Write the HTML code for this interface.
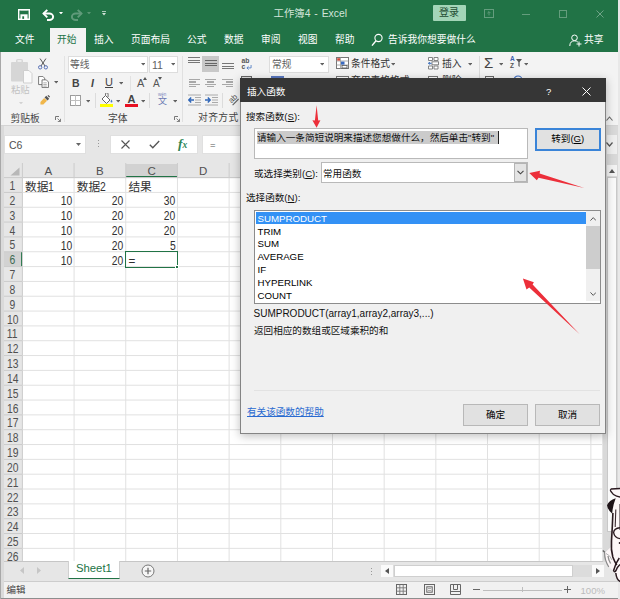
<!DOCTYPE html>
<html lang="zh-CN">
<head>
<meta charset="utf-8">
<title>Excel</title>
<style>
*{box-sizing:border-box;margin:0;padding:0}
html,body{width:620px;height:599px;overflow:hidden;background:#e8e8e8}
body{position:relative;font-family:"Liberation Sans","Noto Sans CJK SC",sans-serif;font-size:10px;color:#333;line-height:1}
.abs{position:absolute}
.t{position:absolute;white-space:nowrap}
#win{position:absolute;left:0;top:0;width:618px;height:599px;background:#f3f3f3;overflow:hidden}
#green{position:absolute;left:0;top:0;width:618px;height:52px;background:#217346}
.tab{position:absolute;top:35px;color:#fff;font-size:9.750px;letter-spacing:0}
#tab-home{position:absolute;left:50px;top:28px;width:36px;height:25px;background:#f3f3f3}
/* grid */
.colh{position:absolute;top:0;height:13px;text-align:center;font-size:11.500px;color:#444;line-height:13px}
.rowh{position:absolute;left:3px;width:19px;text-align:center;font-size:11.500px;color:#505050;line-height:13px;height:13px}
.cell{position:absolute;font-size:11.700px;color:#303030;line-height:14px;height:14px;white-space:nowrap}
.num{display:inline-block;transform:scaleX(.86);font-size:12px}
/* dialog */
#dlg{position:absolute;left:240px;top:78px;width:366px;height:355.500px;background:#f0f0f0;border:1px solid #848484;box-shadow:0 2px 9px rgba(0,0,0,.26)}
#dlg .ttl{position:absolute;left:-1px;top:-1px;right:-1px;height:24px;background:#363636}
.btn{position:absolute;height:22px;width:65px;border:1px solid #b8b8b8;background:#e1e1e1;text-align:center;font-size:9.600px;line-height:20px;color:#000}
.li{position:absolute;left:1px;height:12.600px;line-height:14.600px;font-size:9.700px;color:#000;padding-left:1.500px;overflow:visible}
</style>
</head>
<body>
<div id="win">
  <div id="green"></div>
  <div id="tab-home"></div>
  <!-- TITLE -->
  <div id="titlebar">
    <!-- save icon -->
    <svg class="abs" style="left:18px;top:9px" width="12" height="11" viewBox="0 0 12 11"><path d="M0.700 0.700h10.600v9.600h-10.600z" fill="none" stroke="#fff" stroke-width="1.400"/><rect x="2.400" y="5.300" width="7.200" height="5" fill="#fff"/><rect x="4.300" y="7.300" width="1.800" height="2.600" fill="#217346"/><rect x="2.600" y="1.200" width="6.800" height="0.800" fill="#fff" opacity=".35"/></svg>
    <!-- undo -->
    <svg class="abs" style="left:41.500px;top:8.500px" width="13" height="12" viewBox="0 0 13 12"><path d="M1.500 4.600h5.800a3.800 3.200 0 0 1 0 6.400h-2.300" fill="none" stroke="#fff" stroke-width="2"/><path d="M5.300 0.800L1.500 4.600l3.800 3.800" fill="none" stroke="#fff" stroke-width="1.900"/></svg>
    <svg class="abs" style="left:59px;top:11.500px" width="4" height="2.500" viewBox="0 0 5 3"><path d="M0 0h5L2.500 3z" fill="#fff"/></svg>
    <!-- redo dim -->
    <svg class="abs" style="left:69.500px;top:8.500px" width="13" height="12" viewBox="0 0 13 12" opacity="0.28"><path d="M11.500 4.600h-5.800a3.800 3.200 0 0 0 0 6.400h2.300" fill="none" stroke="#fff" stroke-width="2"/><path d="M7.700 0.800l3.800 3.800l-3.800 3.800" fill="none" stroke="#fff" stroke-width="1.900"/></svg>
    <svg class="abs" style="left:87px;top:11.500px" width="4" height="2.500" viewBox="0 0 5 3" opacity="0.25"><path d="M0 0h5L2.500 3z" fill="#fff"/></svg>
    <!-- customize -->
    <svg class="abs" style="left:101.500px;top:11px" width="4" height="5" viewBox="0 0 5 6" opacity=".8"><rect x="0" y="0" width="5" height="1" fill="#fff"/><path d="M0 2.500h5L2.500 5.500z" fill="#fff"/></svg>
    <div class="t" style="left:273.500px;top:8.500px;font-size:10.400px;color:#d3e5da;word-spacing:1px">工作簿4 - Excel</div>
    <div class="abs" style="left:433px;top:5px;width:33px;height:16px;background:#a3d5b8;border-radius:1px"></div>
    <div class="t" style="left:439px;top:8px;font-size:10px;color:#1e4d33">登录</div>
    <!-- window controls (dim) -->
    <svg class="abs" style="left:484px;top:9px" width="10" height="9" viewBox="0 0 10 9" opacity="0.3"><rect x="0.500" y="0.500" width="9" height="8" fill="none" stroke="#fff"/><path d="M5 2.800v3.600M3.400 4.200L5 2.600l1.600 1.600" fill="none" stroke="#fff" stroke-width=".9"/></svg>
    <div class="abs" style="left:522px;top:13.500px;width:8px;height:1px;background:#fff;opacity:.3"></div>
    <div class="abs" style="left:559px;top:9.500px;width:8px;height:8px;border:1px solid #fff;opacity:.3"></div>
    <svg class="abs" style="left:596px;top:9.500px" width="8" height="8" viewBox="0 0 8 8" opacity="0.35"><path d="M0.500 0.500l7 7M7.500 0.500l-7 7" stroke="#fff" stroke-width="1"/></svg>
  </div>
  <!-- TABS -->
  <div id="tabs">
    <div class="tab" style="left:15px">文件</div>
    <div class="tab" style="left:57px;color:#217346">开始</div>
    <div class="tab" style="left:94px">插入</div>
    <div class="tab" style="left:131px">页面布局</div>
    <div class="tab" style="left:187px">公式</div>
    <div class="tab" style="left:224px">数据</div>
    <div class="tab" style="left:261px">审阅</div>
    <div class="tab" style="left:298px">视图</div>
    <div class="tab" style="left:335px">帮助</div>
    <svg class="abs" style="left:371px;top:33px" width="13" height="14" viewBox="0 0 13 14"><circle cx="7.5" cy="5" r="3.6" fill="none" stroke="#fff" stroke-width="1.1"/><path d="M5 7.8L1 12.6" stroke="#fff" stroke-width="1.4"/></svg>
    <div class="tab" style="left:388px">告诉我你想要做什么</div>
    <svg class="abs" style="left:569px;top:34px" width="13" height="13" viewBox="0 0 13 13"><circle cx="5.5" cy="3.8" r="2.8" fill="none" stroke="#fff" stroke-width="1"/><path d="M0.8 12c0-3.6 2-5.2 4.7-5.2 1.5 0 2.7.5 3.4 1.4" fill="none" stroke="#fff" stroke-width="1"/><path d="M10 7.5v5M7.5 10h5" stroke="#fff" stroke-width="1"/></svg>
    <div class="tab" style="left:584px">共享</div>
  </div>
  <!-- RIBBON -->
  <div id="ribbon">
    <div class="abs" style="left:0;top:125px;width:618px;height:1px;background:#d4d4d4"></div>
    <div class="abs" style="left:0;top:126px;width:618px;height:473px;background:#e6e6e6"></div>
    <!-- clipboard group -->
    <svg class="abs" style="left:9.500px;top:58px" width="24" height="27" viewBox="0 0 24 27"><rect x="1" y="4" width="17" height="19.500" rx="1" fill="#d6d6d6"/><rect x="6" y="1" width="7" height="5" rx="1.5" fill="#d6d6d6"/><rect x="7.5" y="2.2" width="4" height="1.6" fill="#f3f3f3"/><path d="M13.5 12.5h5.5l3 3v9.5h-8.500z" fill="#fafafa" stroke="#cfcfcf" stroke-width="1"/></svg>
    <div class="t" style="left:11px;top:85.500px;font-size:9.300px;color:#c2c2c2">粘贴</div>
    <svg class="abs" style="left:18.500px;top:101.500px" width="4" height="2.400" viewBox="0 0 5 3"><path d="M0 0h5L2.500 3z" fill="#d2d2d2"/></svg>
    <!-- scissors -->
    <svg class="abs" style="left:38px;top:58px" width="10" height="12" viewBox="0 0 12 14"><path d="M2.500 0.500L8.500 9.500M9.500 0.500L3.500 9.500" stroke="#555" stroke-width="1.200" fill="none"/><circle cx="2.600" cy="11" r="2" fill="none" stroke="#4a66b0" stroke-width="1.100"/><circle cx="9.400" cy="11" r="2" fill="none" stroke="#4a66b0" stroke-width="1.100"/></svg>
    <!-- copy -->
    <svg class="abs" style="left:38px;top:76px" width="11.500" height="12" viewBox="0 0 13 14"><path d="M0.500 0.500h5l2 2v7.500h-7z" fill="#fff" stroke="#666" stroke-width="1"/><path d="M4.500 4.500h5l2.500 2.500v6.500h-7.500z" fill="#fff" stroke="#666" stroke-width="1"/><path d="M6 8h4M6 10h4M6 11.800h4" stroke="#888" stroke-width=".8"/></svg>
    <svg class="abs" style="left:54px;top:81px" width="4.400" height="2.600" viewBox="0 0 5 3"><path d="M0 0h5L2.500 3z" fill="#606060"/></svg>
    <!-- format painter -->
    <svg class="abs" style="left:40px;top:94.500px" width="10" height="10" viewBox="0 0 12 12"><path d="M7.500 1l3.500 3.500-2 2-3.500-3.500z" fill="#555"/><path d="M5 3.500l3.500 3.500-4.500 4.500h-3.500v-3z" fill="#f0b64a"/><path d="M9.500 0.500l2 2" stroke="#555" stroke-width="1.500"/></svg>
    <div class="t" style="left:10.500px;top:114px;font-size:9.750px;color:#444">剪贴板</div>
    <svg class="abs" style="left:55px;top:116px" width="6" height="6" viewBox="0 0 6 6"><path d="M0.500 4V0.500H4" fill="none" stroke="#777" stroke-width="1"/><path d="M2.500 2.500l3 3M5.500 2.800v2.700h-2.700" fill="none" stroke="#777" stroke-width=".9"/></svg>
    <div class="abs" style="left:64px;top:56px;width:1px;height:66px;background:#e3e3e3"></div>
    <!-- font group -->
    <div class="abs" style="left:68px;top:56px;width:80px;height:17px;background:#fff;border:1px solid #dddddd"></div>
    <div class="t" style="left:70px;top:60px;font-size:9.750px;color:#606060">等线</div>
    <svg class="abs" style="left:141px;top:63px" width="4.400" height="2.600" viewBox="0 0 5 3"><path d="M0 0h5L2.500 3z" fill="#606060"/></svg>
    <div class="abs" style="left:149px;top:56px;width:29px;height:17px;background:#fff;border:1px solid #dddddd"></div>
    <div class="t" style="left:152px;top:59.500px;font-size:10.500px;color:#606060">11</div>
    <svg class="abs" style="left:171px;top:63px" width="4.400" height="2.600" viewBox="0 0 5 3"><path d="M0 0h5L2.500 3z" fill="#606060"/></svg>
    <div class="t" style="left:72px;top:77.500px;font-size:10.500px;font-weight:bold;color:#444">B</div>
    <div class="t" style="left:91px;top:77.500px;font-size:10.500px;font-weight:bold;font-style:italic;color:#444">I</div>
    <div class="t" style="left:105px;top:77px;font-size:11px;color:#444;border-bottom:1px solid #444;padding-bottom:0px;line-height:10px">U</div>
    <svg class="abs" style="left:119px;top:82px" width="4.400" height="2.600" viewBox="0 0 5 3"><path d="M0 0h5L2.500 3z" fill="#606060"/></svg>
    <div class="t" style="left:137px;top:78px;font-size:11px;color:#555">A</div>
    <svg class="abs" style="left:143px;top:77px" width="4" height="3" viewBox="0 0 4 3"><path d="M0 3L2 0l2 3z" fill="#555"/></svg>
    <div class="t" style="left:153px;top:79px;font-size:10px;color:#555">A</div>
    <svg class="abs" style="left:158px;top:77px" width="4" height="3" viewBox="0 0 4 3"><path d="M0 0h4L2 3z" fill="#555"/></svg>
    <!-- borders -->
    <svg class="abs" style="left:70px;top:95px" width="11" height="11" viewBox="0 0 11 11"><rect x="0.500" y="0.500" width="10" height="10" fill="#fff" stroke="#9c9c9c"/><path d="M5.500 0.500v10M0.500 5.500h10" stroke="#c0c0c0" stroke-width="1"/></svg>
    <svg class="abs" style="left:86px;top:100px" width="4.400" height="2.600" viewBox="0 0 5 3"><path d="M0 0h5L2.500 3z" fill="#606060"/></svg>
    <div class="abs" style="left:95px;top:93px;width:1px;height:15px;background:#dcdcdc"></div>
    <!-- fill color -->
    <svg class="abs" style="left:100px;top:93px" width="14" height="11" viewBox="0 0 14 11"><path d="M5.500 2.500l4.500 4.500-3.500 3.500-4.500-4.500z" fill="#fff" stroke="#666" stroke-width="1"/><path d="M5.500 2.500V1a1.300 1.300 0 0 1 2.600 0v3" fill="none" stroke="#666" stroke-width=".9"/><path d="M11.500 6.500c1.200 1.800 1.200 3 0 3s-1.200-1.200 0-3z" fill="#4a7ac0"/></svg>
    <div class="abs" style="left:100px;top:104px;width:13px;height:3px;background:#ffff00"></div>
    <svg class="abs" style="left:116px;top:100px" width="4.400" height="2.600" viewBox="0 0 5 3"><path d="M0 0h5L2.500 3z" fill="#606060"/></svg>
    <!-- font color -->
    <div class="t" style="left:127.500px;top:93.500px;font-size:11px;font-weight:bold;color:#444">A</div>
    <div class="abs" style="left:125px;top:104px;width:13px;height:3px;background:#e81123"></div>
    <svg class="abs" style="left:141px;top:100px" width="4.400" height="2.600" viewBox="0 0 5 3"><path d="M0 0h5L2.500 3z" fill="#606060"/></svg>
    <div class="abs" style="left:149px;top:93px;width:1px;height:15px;background:#dcdcdc"></div><div class="abs" style="left:130px;top:76px;width:1px;height:15px;background:#e2e2e2"></div>
    <div class="t" style="left:158px;top:96.500px;font-size:9px;color:#6b78b2">文</div>
    <div class="t" style="left:158px;top:92.500px;font-size:4.500px;color:#7d89be;letter-spacing:0">wén</div>
    <svg class="abs" style="left:173px;top:100px" width="4.400" height="2.600" viewBox="0 0 5 3"><path d="M0 0h5L2.500 3z" fill="#606060"/></svg>
    <div class="t" style="left:108px;top:114px;font-size:9.750px;color:#444">字体</div>
    <svg class="abs" style="left:174px;top:116px" width="6" height="6" viewBox="0 0 6 6"><path d="M0.500 4V0.500H4" fill="none" stroke="#777" stroke-width="1"/><path d="M2.500 2.500l3 3M5.500 2.800v2.700h-2.700" fill="none" stroke="#777" stroke-width=".9"/></svg>
    <div class="abs" style="left:182px;top:56px;width:1px;height:66px;background:#e0e0e0"></div>
    <!-- align group -->
    <div class="abs" style="left:202px;top:56px;width:17px;height:16px;background:#c8c8c8"></div>
<div class="abs" style="left:188px;top:57.0px;width:12px;height:1px;background:#777"></div><div class="abs" style="left:188px;top:59.5px;width:12px;height:1px;background:#777"></div><div class="abs" style="left:188px;top:62.0px;width:12px;height:1px;background:#777"></div><div class="abs" style="left:205px;top:60.0px;width:12px;height:1px;background:#666"></div><div class="abs" style="left:205px;top:62.5px;width:12px;height:1px;background:#666"></div><div class="abs" style="left:205px;top:65.0px;width:12px;height:1px;background:#666"></div><div class="abs" style="left:222px;top:63.0px;width:12px;height:1px;background:#777"></div><div class="abs" style="left:222px;top:65.5px;width:12px;height:1px;background:#777"></div><div class="abs" style="left:222px;top:68.0px;width:12px;height:1px;background:#777"></div><div class="abs" style="left:189px;top:79.0px;width:11px;height:1.3px;background:#a8a8a8"></div><div class="abs" style="left:189px;top:81.3px;width:7px;height:1.3px;background:#a8a8a8"></div><div class="abs" style="left:189px;top:83.6px;width:11px;height:1.3px;background:#a8a8a8"></div><div class="abs" style="left:189px;top:85.9px;width:7px;height:1.3px;background:#a8a8a8"></div><div class="abs" style="left:205px;top:79.0px;width:11px;height:1.3px;background:#a8a8a8"></div><div class="abs" style="left:207px;top:81.3px;width:7px;height:1.3px;background:#a8a8a8"></div><div class="abs" style="left:205px;top:83.6px;width:11px;height:1.3px;background:#a8a8a8"></div><div class="abs" style="left:207px;top:85.9px;width:7px;height:1.3px;background:#a8a8a8"></div><div class="abs" style="left:222px;top:79.0px;width:11px;height:1.3px;background:#a8a8a8"></div><div class="abs" style="left:226px;top:81.3px;width:7px;height:1.3px;background:#a8a8a8"></div><div class="abs" style="left:222px;top:83.6px;width:11px;height:1.3px;background:#a8a8a8"></div><div class="abs" style="left:226px;top:85.9px;width:7px;height:1.3px;background:#a8a8a8"></div>
    <!-- wrap text -->
    <div class="t" style="left:241.500px;top:57.500px;font-size:6.800px;font-weight:bold;color:#555;line-height:6px">ab<br>c</div>
    <svg class="abs" style="left:246px;top:64.500px" width="6" height="5" viewBox="0 0 7 6"><path d="M6 0v3.500H1M3 1.500L1 3.500l2 2" fill="none" stroke="#4a7ac0" stroke-width="1"/></svg>
    <!-- indent icons -->
    <svg class="abs" style="left:188px;top:94px" width="13" height="12" viewBox="0 0 13 12"><path d="M0 1h13M7 3.500h6M7 6h6M7 8.500h6M0 11h13" stroke="#aaa" stroke-width="1"/><path d="M6 6H1M3.200 3.500L0.800 6l2.400 2.500" fill="none" stroke="#2f66b8" stroke-width="1.400"/></svg>
    <svg class="abs" style="left:205px;top:94px" width="13" height="12" viewBox="0 0 13 12"><path d="M0 1h13M7 3.500h6M7 6h6M7 8.500h6M0 11h13" stroke="#aaa" stroke-width="1"/><path d="M0 6h5M2.800 3.500L5.200 6 2.800 8.500" fill="none" stroke="#2f66b8" stroke-width="1.400"/></svg>
    <div class="abs" style="left:222px;top:93px;width:1px;height:15px;background:#dcdcdc"></div>
    <div class="t" style="left:232.500px;top:96.500px;font-size:8px;color:#555;transform:rotate(-45deg);transform-origin:left bottom">ab</div>
    <svg class="abs" style="left:229px;top:96px" width="13" height="12" viewBox="0 0 13 12"><path d="M3.600 9.200L9.600 3" stroke="#666" stroke-width="1.100"/></svg>
    <div class="t" style="left:198px;top:113px;font-size:9.750px;color:#444;letter-spacing:.4px">对齐方式</div>
    <div class="abs" style="left:241px;top:75.500px;width:11px;height:5px;border:1px solid #666;border-bottom:0;background:#ddd"></div>
    <!-- number group -->
    <div class="abs" style="left:269px;top:56px;width:60px;height:17px;background:#fff;border:1px solid #dddddd"></div>
    <div class="t" style="left:272px;top:60px;font-size:9.750px;color:#606060">常规</div>
    <svg class="abs" style="left:320px;top:63px" width="4.400" height="2.600" viewBox="0 0 5 3"><path d="M0 0h5L2.500 3z" fill="#606060"/></svg>
    <div class="abs" style="left:271px;top:76px;width:13px;height:3px;background:#5a78c0"></div>
    <!-- styles group -->
    <svg class="abs" style="left:336px;top:57px" width="13" height="12" viewBox="0 0 13 12"><rect x="0.500" y="0.500" width="12" height="11" fill="#fff" stroke="#777"/><path d="M0.500 4h12M0.500 8h12M4.500 0.500v11" stroke="#999" stroke-width=".8"/><rect x="1.200" y="1.200" width="2.800" height="2.400" fill="#d04a3a"/><rect x="5" y="4.600" width="3.500" height="3" fill="#3a6ac0"/><rect x="6" y="8.400" width="5" height="2.600" fill="#fff" stroke="#555" stroke-width=".8"/></svg>
    <div class="t" style="left:351px;top:59px;font-size:9.750px;color:#333">条件格式</div>
    <svg class="abs" style="left:391px;top:63px" width="4.400" height="2.600" viewBox="0 0 5 3"><path d="M0 0h5L2.500 3z" fill="#606060"/></svg>
    <div class="abs" style="left:336px;top:76px;width:13px;height:4px;border:1px solid #777;border-bottom:0;background:#fff"></div>
    <div class="t" style="left:351px;top:75.500px;font-size:9.750px;color:#333">套用表格格式</div>
    <!-- cells group -->
    <svg class="abs" style="left:428px;top:57px" width="11" height="13" viewBox="0 0 11 13"><path d="M0.500 0.500h4v3h-4zM6 0.500h4v3h-4zM0.500 9h4v3h-4zM6 9h4v3h-4z" fill="#fff" stroke="#777" stroke-width=".9"/><rect x="4" y="4.800" width="6.500" height="3" fill="#fff" stroke="#777" stroke-width=".9"/><path d="M3.500 6.300H0.500M1.800 5L0.500 6.300l1.300 1.300" fill="none" stroke="#2f66b8" stroke-width="1"/></svg>
    <div class="t" style="left:442px;top:59px;font-size:9.750px;color:#333">插入</div>
    <svg class="abs" style="left:468px;top:63px" width="4.400" height="2.600" viewBox="0 0 5 3"><path d="M0 0h5L2.500 3z" fill="#606060"/></svg>
    <div class="abs" style="left:428px;top:76px;width:10px;height:4px;border:1px solid #777;border-bottom:0;background:#fff"></div>
    <div class="t" style="left:442px;top:75.500px;font-size:9.750px;color:#333">删除</div>
    <div class="abs" style="left:479px;top:56px;width:1px;height:24px;background:#dadada"></div>
    <!-- editing group -->
    <div class="t" style="left:484px;top:55px;font-size:15px;color:#444;transform-origin:left">&#931;</div>
    <svg class="abs" style="left:499px;top:63px" width="4.400" height="2.600" viewBox="0 0 5 3"><path d="M0 0h5L2.500 3z" fill="#606060"/></svg>
    <div class="t" style="left:510px;top:56px;font-size:6.500px;color:#3a5fae;line-height:6.500px;font-weight:bold">A<br><span style="color:#555">Z</span></div>
    <svg class="abs" style="left:516px;top:59px" width="6" height="8" viewBox="0 0 6 8"><path d="M0 0h6L3.600 3v5L2.400 7V3z" fill="#555"/></svg>
    <svg class="abs" style="left:524px;top:63px" width="4.400" height="2.600" viewBox="0 0 5 3"><path d="M0 0h5L2.500 3z" fill="#606060"/></svg>
    <div class="abs" style="left:485px;top:76px;width:9px;height:4px;border:1px solid #666;border-bottom:0"></div>
    <svg class="abs" style="left:513px;top:75px" width="10" height="6" viewBox="0 0 10 6"><circle cx="5" cy="5" r="4" fill="none" stroke="#3a6ac0" stroke-width="1.200"/></svg>
    <!-- collapse chevron + formula expand + scroll -->
    <svg class="abs" style="left:606px;top:116px" width="7" height="5" viewBox="0 0 7 5"><path d="M0.500 4.500l3-3.500 3 3.500" fill="none" stroke="#666" stroke-width="1.100"/></svg>
  </div>
  <!-- FORMULA -->
  <div id="fbar">
    <div class="abs" style="left:4px;top:135px;width:82px;height:19px;background:#fff;border:1px solid #e0e0e0"></div>
    <div class="t" style="left:9px;top:139.500px;font-size:10.500px;color:#505050">C6</div>
    <svg class="abs" style="left:76px;top:143px" width="5" height="3" viewBox="0 0 5 3"><path d="M0 0h5L2.500 3z" fill="#666"/></svg>
    <div class="abs" style="left:98px;top:140px;width:1px;height:1px;background:#999;box-shadow:0 3px 0 #999,0 6px 0 #999"></div>
    <div class="abs" style="left:110px;top:135px;width:88px;height:19px;background:#fff;border:1px solid #e0e0e0"></div>
    <svg class="abs" style="left:121px;top:140px" width="9" height="9" viewBox="0 0 9 9"><path d="M0.500 0.500l8 8M8.500 0.500l-8 8" stroke="#555" stroke-width="1.100"/></svg>
    <svg class="abs" style="left:149px;top:140px" width="11" height="9" viewBox="0 0 11 9"><path d="M0.800 4.800l3 3L10.200 1" fill="none" stroke="#555" stroke-width="1.300"/></svg>
    <div class="t" style="left:178px;top:136.500px;font-size:13.500px;font-style:italic;font-weight:bold;color:#2e8556;font-family:'Liberation Serif',serif">f<span style="font-size:9.500px">x</span></div>
    <div class="abs" style="left:202px;top:135px;width:400px;height:19px;background:#fff;border:1px solid #e0e0e0"></div>
    <div class="t" style="left:210px;top:140px;font-size:9.500px;color:#555">=</div>
  </div>
  <!-- GRID -->
  <div id="grid" style="position:absolute;left:0;top:163px;width:602px;height:398.5px;background:#fff;overflow:hidden"><div class="abs" style="left:0;top:0;width:602px;height:14.6px;background:#e6e6e6"></div><div class="abs" style="left:0;top:0;width:22.4px;height:398.5px;background:#e6e6e6"></div><div class="abs" style="left:125.8px;top:0.5px;width:51.7px;height:13.1px;background:#d2d2d2"></div><div class="abs" style="left:125.8px;top:13.3px;width:51.7px;height:1.3px;background:#217346"></div><div class="abs" style="left:1px;top:88.8px;width:21.4px;height:14.8px;background:#d2d2d2"></div><div class="abs" style="left:21.1px;top:88.8px;width:1.3px;height:14.8px;background:#217346"></div><svg class="abs" style="left:0;top:0" width="602" height="398.5" viewBox="0 163 602 398.5"><path d="M22.40 163V177.60" stroke="#cbcbcb" stroke-width="1"/><path d="M22.40 177.60V561.5" stroke="#cbcbcb" stroke-width="1"/><path d="M74.08 163V177.60" stroke="#cbcbcb" stroke-width="1"/><path d="M74.08 177.60V561.5" stroke="#e1e1e1" stroke-width="1"/><path d="M125.76 163V177.60" stroke="#cbcbcb" stroke-width="1"/><path d="M125.76 177.60V561.5" stroke="#e1e1e1" stroke-width="1"/><path d="M177.44 163V177.60" stroke="#cbcbcb" stroke-width="1"/><path d="M177.44 177.60V561.5" stroke="#e1e1e1" stroke-width="1"/><path d="M229.12 163V177.60" stroke="#cbcbcb" stroke-width="1"/><path d="M229.12 177.60V561.5" stroke="#e1e1e1" stroke-width="1"/><path d="M280.80 163V177.60" stroke="#cbcbcb" stroke-width="1"/><path d="M280.80 177.60V561.5" stroke="#e1e1e1" stroke-width="1"/><path d="M332.48 163V177.60" stroke="#cbcbcb" stroke-width="1"/><path d="M332.48 177.60V561.5" stroke="#e1e1e1" stroke-width="1"/><path d="M384.16 163V177.60" stroke="#cbcbcb" stroke-width="1"/><path d="M384.16 177.60V561.5" stroke="#e1e1e1" stroke-width="1"/><path d="M435.84 163V177.60" stroke="#cbcbcb" stroke-width="1"/><path d="M435.84 177.60V561.5" stroke="#e1e1e1" stroke-width="1"/><path d="M487.52 163V177.60" stroke="#cbcbcb" stroke-width="1"/><path d="M487.52 177.60V561.5" stroke="#e1e1e1" stroke-width="1"/><path d="M539.20 163V177.60" stroke="#cbcbcb" stroke-width="1"/><path d="M539.20 177.60V561.5" stroke="#e1e1e1" stroke-width="1"/><path d="M590.88 163V177.60" stroke="#cbcbcb" stroke-width="1"/><path d="M590.88 177.60V561.5" stroke="#e1e1e1" stroke-width="1"/><path d="M22.40 177.60H602" stroke="#e1e1e1" stroke-width="1"/><path d="M3 177.60H22.40" stroke="#cbcbcb" stroke-width="1"/><path d="M22.40 192.43H602" stroke="#e1e1e1" stroke-width="1"/><path d="M3 192.43H22.40" stroke="#cbcbcb" stroke-width="1"/><path d="M22.40 207.26H602" stroke="#e1e1e1" stroke-width="1"/><path d="M3 207.26H22.40" stroke="#cbcbcb" stroke-width="1"/><path d="M22.40 222.09H602" stroke="#e1e1e1" stroke-width="1"/><path d="M3 222.09H22.40" stroke="#cbcbcb" stroke-width="1"/><path d="M22.40 236.92H602" stroke="#e1e1e1" stroke-width="1"/><path d="M3 236.92H22.40" stroke="#cbcbcb" stroke-width="1"/><path d="M22.40 251.75H602" stroke="#e1e1e1" stroke-width="1"/><path d="M3 251.75H22.40" stroke="#cbcbcb" stroke-width="1"/><path d="M22.40 266.58H602" stroke="#e1e1e1" stroke-width="1"/><path d="M3 266.58H22.40" stroke="#cbcbcb" stroke-width="1"/><path d="M22.40 281.41H602" stroke="#e1e1e1" stroke-width="1"/><path d="M3 281.41H22.40" stroke="#cbcbcb" stroke-width="1"/><path d="M22.40 296.24H602" stroke="#e1e1e1" stroke-width="1"/><path d="M3 296.24H22.40" stroke="#cbcbcb" stroke-width="1"/><path d="M22.40 311.07H602" stroke="#e1e1e1" stroke-width="1"/><path d="M3 311.07H22.40" stroke="#cbcbcb" stroke-width="1"/><path d="M22.40 325.90H602" stroke="#e1e1e1" stroke-width="1"/><path d="M3 325.90H22.40" stroke="#cbcbcb" stroke-width="1"/><path d="M22.40 340.73H602" stroke="#e1e1e1" stroke-width="1"/><path d="M3 340.73H22.40" stroke="#cbcbcb" stroke-width="1"/><path d="M22.40 355.56H602" stroke="#e1e1e1" stroke-width="1"/><path d="M3 355.56H22.40" stroke="#cbcbcb" stroke-width="1"/><path d="M22.40 370.39H602" stroke="#e1e1e1" stroke-width="1"/><path d="M3 370.39H22.40" stroke="#cbcbcb" stroke-width="1"/><path d="M22.40 385.22H602" stroke="#e1e1e1" stroke-width="1"/><path d="M3 385.22H22.40" stroke="#cbcbcb" stroke-width="1"/><path d="M22.40 400.05H602" stroke="#e1e1e1" stroke-width="1"/><path d="M3 400.05H22.40" stroke="#cbcbcb" stroke-width="1"/><path d="M22.40 414.88H602" stroke="#e1e1e1" stroke-width="1"/><path d="M3 414.88H22.40" stroke="#cbcbcb" stroke-width="1"/><path d="M22.40 429.71H602" stroke="#e1e1e1" stroke-width="1"/><path d="M3 429.71H22.40" stroke="#cbcbcb" stroke-width="1"/><path d="M22.40 444.54H602" stroke="#e1e1e1" stroke-width="1"/><path d="M3 444.54H22.40" stroke="#cbcbcb" stroke-width="1"/><path d="M22.40 459.37H602" stroke="#e1e1e1" stroke-width="1"/><path d="M3 459.37H22.40" stroke="#cbcbcb" stroke-width="1"/><path d="M22.40 474.20H602" stroke="#e1e1e1" stroke-width="1"/><path d="M3 474.20H22.40" stroke="#cbcbcb" stroke-width="1"/><path d="M22.40 489.03H602" stroke="#e1e1e1" stroke-width="1"/><path d="M3 489.03H22.40" stroke="#cbcbcb" stroke-width="1"/><path d="M22.40 503.86H602" stroke="#e1e1e1" stroke-width="1"/><path d="M3 503.86H22.40" stroke="#cbcbcb" stroke-width="1"/><path d="M22.40 518.69H602" stroke="#e1e1e1" stroke-width="1"/><path d="M3 518.69H22.40" stroke="#cbcbcb" stroke-width="1"/><path d="M22.40 533.52H602" stroke="#e1e1e1" stroke-width="1"/><path d="M3 533.52H22.40" stroke="#cbcbcb" stroke-width="1"/><path d="M22.40 548.35H602" stroke="#e1e1e1" stroke-width="1"/><path d="M3 548.35H22.40" stroke="#cbcbcb" stroke-width="1"/><path d="M22.40 563.18H602" stroke="#e1e1e1" stroke-width="1"/><path d="M3 563.18H22.40" stroke="#cbcbcb" stroke-width="1"/><path d="M22.40 177.60H602" stroke="#cbcbcb" stroke-width="1"/><path d="M19.500 167.500V175.500H10.500z" fill="#b8b8b8"/></svg><div class="colh" style="left:22.4px;width:51.7px;top:1.5px;color:#505050">A</div><div class="colh" style="left:74.1px;width:51.7px;top:1.5px;color:#505050">B</div><div class="colh" style="left:125.8px;width:51.7px;top:1.5px;color:#505050">C</div><div class="colh" style="left:177.4px;width:51.7px;top:1.5px;color:#505050">D</div><div class="colh" style="left:229.1px;width:51.7px;top:1.5px;color:#505050">E</div><div class="colh" style="left:280.8px;width:51.7px;top:1.5px;color:#505050">F</div><div class="colh" style="left:332.5px;width:51.7px;top:1.5px;color:#505050">G</div><div class="colh" style="left:384.2px;width:51.7px;top:1.5px;color:#505050">H</div><div class="colh" style="left:435.8px;width:51.7px;top:1.5px;color:#505050">I</div><div class="colh" style="left:487.5px;width:51.7px;top:1.5px;color:#505050">J</div><div class="colh" style="left:539.2px;width:51.7px;top:1.5px;color:#505050">K</div><div class="rowh" style="top:17.1px"><span class="num" style="transform-origin:center">1</span></div><div class="rowh" style="top:31.9px"><span class="num" style="transform-origin:center">2</span></div><div class="rowh" style="top:46.8px"><span class="num" style="transform-origin:center">3</span></div><div class="rowh" style="top:61.6px"><span class="num" style="transform-origin:center">4</span></div><div class="rowh" style="top:76.4px"><span class="num" style="transform-origin:center">5</span></div><div class="rowh" style="top:91.2px"><span class="num" style="transform-origin:center;color:#3d6b52">6</span></div><div class="rowh" style="top:106.1px"><span class="num" style="transform-origin:center">7</span></div><div class="rowh" style="top:120.9px"><span class="num" style="transform-origin:center">8</span></div><div class="rowh" style="top:135.7px"><span class="num" style="transform-origin:center">9</span></div><div class="rowh" style="top:150.6px"><span class="num" style="transform-origin:center">10</span></div><div class="rowh" style="top:165.4px"><span class="num" style="transform-origin:center">11</span></div><div class="rowh" style="top:180.2px"><span class="num" style="transform-origin:center">12</span></div><div class="rowh" style="top:195.1px"><span class="num" style="transform-origin:center">13</span></div><div class="rowh" style="top:209.9px"><span class="num" style="transform-origin:center">14</span></div><div class="rowh" style="top:224.7px"><span class="num" style="transform-origin:center">15</span></div><div class="rowh" style="top:239.5px"><span class="num" style="transform-origin:center">16</span></div><div class="rowh" style="top:254.4px"><span class="num" style="transform-origin:center">17</span></div><div class="rowh" style="top:269.2px"><span class="num" style="transform-origin:center">18</span></div><div class="rowh" style="top:284.0px"><span class="num" style="transform-origin:center">19</span></div><div class="rowh" style="top:298.9px"><span class="num" style="transform-origin:center">20</span></div><div class="rowh" style="top:313.7px"><span class="num" style="transform-origin:center">21</span></div><div class="rowh" style="top:328.5px"><span class="num" style="transform-origin:center">22</span></div><div class="rowh" style="top:343.4px"><span class="num" style="transform-origin:center">23</span></div><div class="rowh" style="top:358.2px"><span class="num" style="transform-origin:center">24</span></div><div class="rowh" style="top:373.0px"><span class="num" style="transform-origin:center">25</span></div><div class="rowh" style="top:387.9px"><span class="num" style="transform-origin:center">26</span></div><div class="cell" style="left:25.0px;top:16.5px">数据<span class="num" style="transform-origin:left center">1</span></div><div class="cell" style="left:76.7px;top:16.5px">数据<span class="num" style="transform-origin:left center">2</span></div><div class="cell" style="left:128.4px;top:16.5px">结果</div><div class="cell" style="left:22.4px;top:31.3px;width:49.5px;text-align:right"><span class="num" style="transform-origin:right center">10</span></div><div class="cell" style="left:74.1px;top:31.3px;width:49.5px;text-align:right"><span class="num" style="transform-origin:right center">20</span></div><div class="cell" style="left:125.8px;top:31.3px;width:49.5px;text-align:right"><span class="num" style="transform-origin:right center">30</span></div><div class="cell" style="left:22.4px;top:46.2px;width:49.5px;text-align:right"><span class="num" style="transform-origin:right center">10</span></div><div class="cell" style="left:74.1px;top:46.2px;width:49.5px;text-align:right"><span class="num" style="transform-origin:right center">20</span></div><div class="cell" style="left:125.8px;top:46.2px;width:49.5px;text-align:right"><span class="num" style="transform-origin:right center">20</span></div><div class="cell" style="left:22.4px;top:61.0px;width:49.5px;text-align:right"><span class="num" style="transform-origin:right center">10</span></div><div class="cell" style="left:74.1px;top:61.0px;width:49.5px;text-align:right"><span class="num" style="transform-origin:right center">20</span></div><div class="cell" style="left:125.8px;top:61.0px;width:49.5px;text-align:right"><span class="num" style="transform-origin:right center">20</span></div><div class="cell" style="left:22.4px;top:75.8px;width:49.5px;text-align:right"><span class="num" style="transform-origin:right center">10</span></div><div class="cell" style="left:74.1px;top:75.8px;width:49.5px;text-align:right"><span class="num" style="transform-origin:right center">20</span></div><div class="cell" style="left:125.8px;top:75.8px;width:49.5px;text-align:right"><span class="num" style="transform-origin:right center">5</span></div><div class="cell" style="left:22.4px;top:90.7px;width:49.5px;text-align:right"><span class="num" style="transform-origin:right center">10</span></div><div class="cell" style="left:74.1px;top:90.7px;width:49.5px;text-align:right"><span class="num" style="transform-origin:right center">20</span></div><div class="cell" style="left:128.4px;top:90.7px">=</div><div class="abs" style="left:124.8px;top:87.8px;width:53.7px;height:16.8px;border:1.6px solid #217346"></div><div class="abs" style="left:175.4px;top:101.6px;width:4px;height:4px;background:#217346;border:.5px solid #fff"></div></div><!--/grid-->
  <!-- SHEETBAR -->
  <div id="sheetbar">
    <div class="abs" style="left:0;top:561.5px;width:618px;height:19px;background:#e6e6e6"></div>
    <div class="abs" style="left:0;top:561px;width:603px;height:1px;background:#c6c6c6"></div>
    <svg class="abs" style="left:20px;top:567px" width="4" height="7" viewBox="0 0 4 7"><path d="M4 0L0 3.500 4 7z" fill="#c6c6c6"/></svg>
    <svg class="abs" style="left:37px;top:567px" width="4" height="7" viewBox="0 0 4 7"><path d="M0 0l4 3.500L0 7z" fill="#c6c6c6"/></svg>
    <div class="abs" style="left:68px;top:561px;width:52px;height:17.500px;background:#fff;border-bottom:1.500px solid #217346;border-left:1px solid #d0d0d0;border-right:1px solid #d0d0d0"></div>
    <div class="t" style="left:76px;top:562.500px;font-size:11.300px;color:#217346">Sheet1</div>
    <svg class="abs" style="left:141px;top:564px" width="14" height="14" viewBox="0 0 14 14"><circle cx="7" cy="7" r="6" fill="#f6f6f6" stroke="#777" stroke-width="1"/><path d="M7 3.800v6.400M3.800 7h6.400" stroke="#666" stroke-width="1.200"/></svg>
    <div class="abs" style="left:370.500px;top:568px;width:1px;height:1px;background:#999;box-shadow:0 3px 0 #999,0 6px 0 #999"></div>
    <div class="abs" style="left:381px;top:564.500px;width:222px;height:12px;background:#dcdcdc"></div>
    <div class="abs" style="left:381px;top:564.500px;width:12px;height:12px;background:#fafafa"></div>
    <svg class="abs" style="left:385px;top:567.500px" width="4" height="6" viewBox="0 0 4 6"><path d="M4 0L0 3 4 6z" fill="#555"/></svg>
    <div class="abs" style="left:394px;top:564.500px;width:179px;height:12px;background:#fff;border:1px solid #cfcfcf"></div>
    <div class="abs" style="left:591.500px;top:564.500px;width:12px;height:12px;background:#fafafa"></div>
    <svg class="abs" style="left:596px;top:567.500px" width="4" height="6" viewBox="0 0 4 6"><path d="M0 0l4 3L0 6z" fill="#555"/></svg>
  </div>
  <!-- STATUS -->
  <div id="status">
    <div class="abs" style="left:0;top:580.500px;width:618px;height:18px;background:#f1f1f1;border-top:1px solid #cdcdcd"></div>
    <div class="t" style="left:6.500px;top:585px;font-size:9.500px;color:#444">编辑</div>
    <svg class="abs" style="left:396px;top:584px" width="11" height="11" viewBox="0 0 11 11"><rect x="0.500" y="0.500" width="10" height="10" fill="none" stroke="#666"/><path d="M0.500 3.800h10M0.500 7.200h10M3.800 0.500v10M7.200 0.500v10" stroke="#777" stroke-width=".9"/></svg>
    <svg class="abs" style="left:423.500px;top:584px" width="11" height="11" viewBox="0 0 11 11"><rect x="0.500" y="0.500" width="10" height="10" fill="none" stroke="#666"/><rect x="2.800" y="2.800" width="5.400" height="5.400" fill="none" stroke="#666"/><path d="M4 4.500h3M4 6.500h3" stroke="#888" stroke-width=".7"/></svg>
    <svg class="abs" style="left:450px;top:584px" width="11" height="11" viewBox="0 0 11 11"><path d="M0.500 0.500h10v10h-10z" fill="none" stroke="#666"/><path d="M3.500 0.500v5h4v-5M0.500 7.500h10" fill="none" stroke="#666"/></svg>
    <div class="abs" style="left:473px;top:589px;width:6.500px;height:1.300px;background:#666"></div>
    <div class="abs" style="left:482.500px;top:589.500px;width:79px;height:1px;background:#bdbdbd"></div>
    <div class="abs" style="left:522px;top:587px;width:1px;height:5px;background:#bdbdbd"></div>
    <div class="abs" style="left:564px;top:589px;width:7px;height:1.300px;background:#666"></div>
    <div class="abs" style="left:567px;top:586.200px;width:1.300px;height:7px;background:#666"></div>
    <div class="t" style="left:580.500px;top:585.500px;font-size:9.600px;color:#bcbcbc">100%</div>
    <div class="abs" style="left:0;top:597.500px;width:620px;height:1.500px;background:#8e8e8e"></div>
  </div>
  <!-- vertical scrollbar -->
  <div class="abs" style="left:603px;top:126px;width:15px;height:436px;background:#d9d9d9"></div>
  <div class="abs" style="left:606.500px;top:134.500px;width:10px;height:19px;background:#efefef"></div>
  <svg class="abs" style="left:606px;top:142px" width="7" height="5" viewBox="0 0 7 5"><path d="M0.500 0.500l3 3.500 3-3.500" fill="none" stroke="#555" stroke-width="1.200"/></svg>
  <div class="abs" style="left:606.500px;top:164.500px;width:10px;height:11.500px;background:#f3f3f3"></div>
  <svg class="abs" style="left:608.500px;top:168.500px" width="6" height="4" viewBox="0 0 6 4"><path d="M0 4L3 0l3 4z" fill="#555"/></svg>
  <div class="abs" style="left:606.500px;top:177px;width:10px;height:355px;background:#fafafa;border:1px solid #c8c8c8"></div>
  <div class="abs" style="left:606.500px;top:552px;width:10px;height:10px;background:#f3f3f3"></div>
  <div class="abs" style="left:0;top:52px;width:1px;height:547px;background:#a8a8a8"></div><div class="abs" style="left:1px;top:126px;width:2.500px;height:472px;background:#dadada"></div>
</div>
<!-- DIALOG -->
<div id="dlg">
  <div class="ttl"></div>
  <div class="t" style="left:6px;top:8px;font-size:9.600px;color:#fff">插入函数</div>
  <div class="t" style="left:305px;top:8px;font-size:9.500px;color:#fff">?</div>
  <svg class="abs" style="left:341px;top:8px" width="9" height="9" viewBox="0 0 9 9"><path d="M0.500 0.500l8 8M8.500 0.500l-8 8" stroke="#fff" stroke-width="1"/></svg>
  <div class="t" style="left:5px;top:33px;font-size:9.600px;color:#111">搜索函数(<u>S</u>):</div>
  <div class="abs" style="left:13px;top:49px;width:274px;height:31px;background:#fff;border:1px solid #b9b9b9"></div>
  <div class="abs" style="left:15.500px;top:52px;width:241px;height:12.500px;background:#cbcbcb"></div>
  <div class="t" id="srch" style="left:16px;top:53.500px;font-size:9.600px;color:#111">请输入一条简短说明来描述您想做什么，然后单击"转到"</div>
  <div class="abs" style="left:256.500px;top:52px;width:1px;height:12.500px;background:#222"></div>
  <div class="btn" style="left:294px;top:49px;border:2px solid #3a84d8;line-height:18px;height:22.500px;width:65.500px">转到(<u>G</u>)</div>
  <div class="t" style="left:13px;top:89.500px;font-size:9.600px;color:#111">或选择类别(<u>C</u>):</div>
  <div class="abs" style="left:80px;top:83px;width:207px;height:21px;background:#fff;border:1px solid #b9b9b9"></div>
  <div class="t" style="left:82px;top:89.500px;font-size:9.600px;color:#111">常用函数</div>
  <div class="abs" style="left:273px;top:84px;width:13px;height:19px;background:#e4e4e4;border:1px solid #b4b4b4"></div>
  <svg class="abs" style="left:276px;top:91px" width="7" height="5" viewBox="0 0 7 5"><path d="M0.500 0.800l3 3 3-3" fill="none" stroke="#444" stroke-width="1.100"/></svg>
  <div class="t" style="left:5px;top:114px;font-size:9.600px;color:#111">选择函数(<u>N</u>):</div>
  <div class="abs" id="list" style="left:13px;top:131px;width:346.500px;height:94px;background:#fff;border:1px solid #8c8c8c;overflow:hidden">
    <div class="li" style="top:0.6px;width:330px;background:#3391f5;color:#fff">SUMPRODUCT</div><div class="li" style="top:13.5px">TRIM</div><div class="li" style="top:26.4px">SUM</div><div class="li" style="top:39.3px">AVERAGE</div><div class="li" style="top:52.2px">IF</div><div class="li" style="top:65.1px">HYPERLINK</div><div class="li" style="top:78.0px">COUNT</div>
    <div class="abs" style="left:331px;top:0;width:14px;height:90px;background:#f0f0f0"></div>
    <div class="abs" style="left:331px;top:15px;width:14px;height:43px;background:#cdcdcd"></div>
    <svg class="abs" style="left:334.500px;top:5.500px" width="6.500" height="4" viewBox="0 0 8 5"><path d="M0.500 4.500l3.500-3.700 3.500 3.700" fill="none" stroke="#444" stroke-width="1.100"/></svg>
    <svg class="abs" style="left:334.500px;top:81px" width="6.500" height="4" viewBox="0 0 8 5"><path d="M0.500 0.500l3.500 3.700 3.500-3.700" fill="none" stroke="#444" stroke-width="1.100"/></svg>
  </div>
  <div class="t" style="left:12.500px;top:230px;font-size:10px;color:#111">SUMPRODUCT(array1,array2,array3,...)</div>
  <div class="t" style="left:13px;top:246.500px;font-size:9.600px;color:#111">返回相应的数组或区域乘积的和</div>
  <div class="abs" style="left:13px;top:311px;width:346px;height:1px;background:#e2e2e2"></div>
  <div class="t" style="left:6px;top:328px;font-size:9.600px;color:#2a6bd0;text-decoration:underline">有关该函数的帮助</div>
  <div class="btn" style="left:222px;top:325px">确定</div>
  <div class="btn" style="left:294px;top:325px">取消</div>
</div>
<svg id="fig" class="abs" style="left:596px;top:480px" width="24" height="110" viewBox="596 480 24 110">
<path d="M620 488.500L611 489L610.300 490.600L613.500 494.600L616 496.700L614 500L612.800 513L611.600 540L611 547L605 552.500L605.500 560L609 567L613.500 571L616 574L617.500 579L620 582z" fill="#fdf7f8"/>
<path d="M620 488.500L611.200 489Q609.800 490 611 491.500L613.500 494.600Q616.500 496.800 620 497" fill="none" stroke="#2a1a20" stroke-width="1.300"/>
<path d="M615.700 498.300Q609 500.500 607 505.200Q608 510.500 612.300 513.800Q612.300 507 615.700 498.300z" fill="#1e1418"/>
<path d="M612.900 513Q612.300 528 611.500 541Q610.800 550 612.800 557Q614.500 561.500 616.800 565" fill="none" stroke="#2a1a20" stroke-width="1.600"/>
<path d="M615.800 509.500L615.200 527" fill="none" stroke="#3a2a30" stroke-width="1.100"/>
<path d="M619.600 504V530" fill="none" stroke="#8a8084" stroke-width="1"/>
<path d="M620 527.800Q614 528.500 613.600 532.500Q614.500 538 620 538.600" fill="none" stroke="#2a1a20" stroke-width="1.400"/>
<circle cx="619.700" cy="543" r="1" fill="#2a1a20"/>
<path d="M602.800 550.600L605 552.600" stroke="#666" stroke-width="1.400" fill="none"/>
<path d="M604.600 553Q604.500 560 608.800 567" fill="none" stroke="#8a8a8a" stroke-width="1.200"/>
<path d="M608 556Q608.500 560 610.600 563.500" fill="none" stroke="#909090" stroke-width="1.400"/>
<path d="M606 553.500Q610 555 612 560" fill="none" stroke="#b0b0b0" stroke-width="1"/>
<path d="M619.300 558Q615.500 563 613.600 570.500Q614.500 573 616 570.500Q617.500 566.500 620 564.500" fill="none" stroke="#2a1a20" stroke-width="1.500"/>
<path d="M615.800 573Q616.500 579.500 620 581.500" fill="none" stroke="#2a1a20" stroke-width="1.500"/>
</svg>
<!-- ARROWS -->
<svg id="arrows" class="abs" style="left:0;top:0" width="620" height="599" viewBox="0 0 620 599">
<g fill="#ec2f3a">
<path d="M316.600 105.300L318.200 120.500L320.400 120.300L316.600 127.800L312.400 120.300L314.900 120.500z"/>
<path d="M529.300 172.900L540 170.800L539.600 173.600L584.300 188.100L538.600 177.800L536.800 180.200z"/>
<path d="M522.900 278.400L533.900 282.300L532.600 284.600L579.700 334.300L529.200 287.600L526.500 289.400z"/>
</g>
</svg>
</body>
</html>
